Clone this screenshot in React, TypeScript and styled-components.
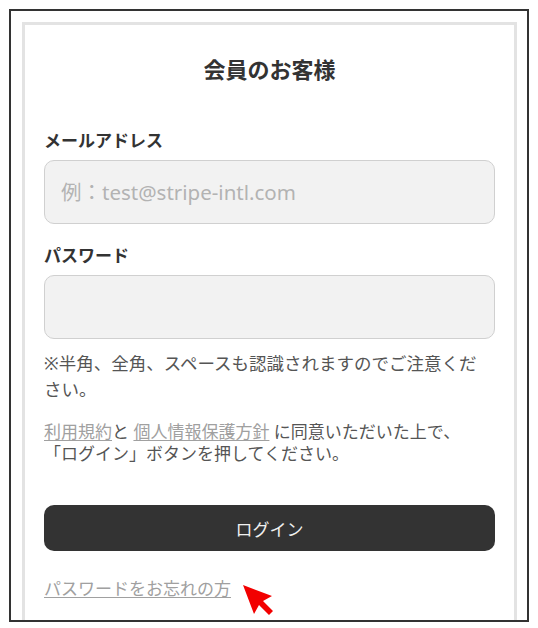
import React from 'react';
import styled, { createGlobalStyle } from 'styled-components';

const GlobalStyle = createGlobalStyle`
  body {
    margin: 0;
    background: #ffffff;
    font-family: "Noto Sans", "Noto Sans CJK JP", sans-serif;
    color: #333333;
  }
`;

const Frame = styled.div`
  position: relative;
  box-sizing: border-box;
  width: 520px;
  height: 613px;
  margin: 9px 0 0 9px;
  padding: 11px 10px 0 11px;
  border: 2px solid #333333;
  overflow: hidden;
`;

const Card = styled.div`
  box-sizing: border-box;
  height: 100%;
  padding: 29px 19px 0;
  border: 3px solid #e3e3e3;
  border-bottom: none;
`;

const Title = styled.h2`
  margin: 0 0 45px;
  font-size: 22px;
  font-weight: 700;
  line-height: 30px;
  text-align: center;
  color: #333333;
`;

const Field = styled.div<{ $gap?: number }>`
  display: flex;
  flex-direction: column;
  gap: 7px;
  margin-top: ${({ $gap }) => $gap ?? 0}px;
`;

const Label = styled.label`
  font-size: 17px;
  font-weight: 700;
  line-height: 24px;
  color: #333333;
`;

const Input = styled.input`
  box-sizing: border-box;
  width: 100%;
  height: 64px;
  padding: 0 16px;
  border: 1.5px solid #d0d0d0;
  border-radius: 10px;
  background: #f2f2f2;
  font-family: inherit;
  font-size: 20.5px;
  color: #333333;
  outline: none;

  &::placeholder {
    color: #b3b3b3;
  }
`;

const Note = styled.p`
  margin: 11px 0 0;
  padding-right: 14px;
  font-size: 17.5px;
  line-height: 26px;
  color: #555555;
`;

const Terms = styled.p`
  margin: 19px 0 0;
  font-size: 17px;
  line-height: 22px;
  color: #555555;
`;

const TextLink = styled.a`
  color: #a0a0a0;
  text-decoration: underline;
  text-underline-offset: 2px;
  cursor: pointer;
`;

const LoginButton = styled.button`
  display: block;
  box-sizing: border-box;
  width: 100%;
  height: 46px;
  margin-top: 40px;
  border: none;
  border-radius: 10px;
  background: #333333;
  color: #f0f0f0;
  font-family: inherit;
  font-size: 17px;
  cursor: pointer;
`;

const Forgot = styled.div`
  margin-top: 26px;
  font-size: 17px;
  line-height: 24px;
`;

const Pointer = styled.svg`
  position: absolute;
  left: 230px;
  top: 572px;
  width: 34px;
  height: 34px;
`;

export default function App() {
  return (
    <>
      <GlobalStyle />
      <Frame>
        <Card>
          <Title>会員のお客様</Title>

          <Field>
            <Label htmlFor="email">メールアドレス</Label>
            <Input id="email" type="email" placeholder="例：test@stripe-intl.com" />
          </Field>

          <Field $gap={20}>
            <Label htmlFor="password">パスワード</Label>
            <Input id="password" type="password" />
          </Field>

          <Note>※半角、全角、スペースも認識されますのでご注意ください。</Note>

          <Terms>
            <TextLink>利用規約</TextLink>と <TextLink>個人情報保護方針</TextLink> に同意いただいた上で、
            <br />
            「ログイン」ボタンを押してください。
          </Terms>

          <LoginButton type="button">ログイン</LoginButton>

          <Forgot>
            <TextLink>パスワードをお忘れの方</TextLink>
          </Forgot>
        </Card>

        {/* red cursor pointing at the link */}
        <Pointer viewBox="0 0 34 34">
          <polygon
            points="2,2 31,13 22,18 32,28 28,32 18,22 13,31"
            fill="#f20000"
          />
        </Pointer>
      </Frame>
    </>
  );
}
